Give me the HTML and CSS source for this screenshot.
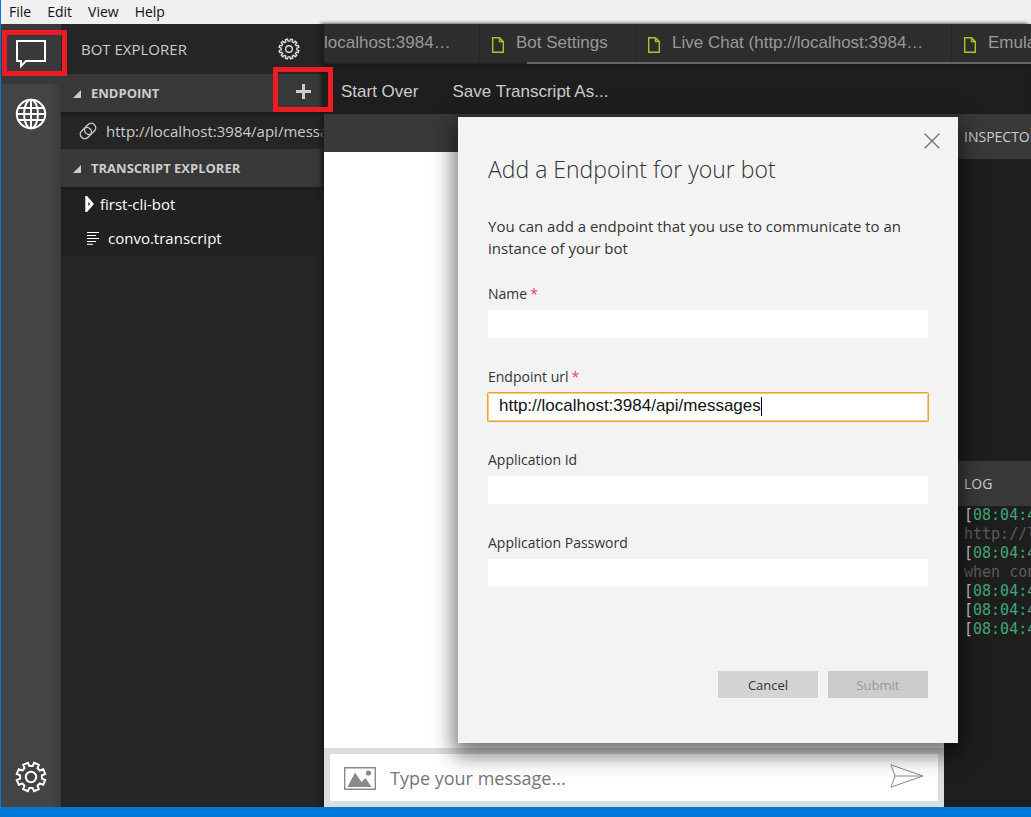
FILE: index.html
```html
<!DOCTYPE html>
<html lang="en">
<head>
<meta charset="utf-8">
<title>Bot Emulator</title>
<link rel="stylesheet" href="styles.css">
</head>
<body>
<svg class="defs" aria-hidden="true">
  <symbol id="gear" viewBox="-16 -16 32 32">
    <path d="M10.9 1.6 14.2 3.1 12.2 7.8 8.8 6.5 6.5 8.8 7.8 12.2 3.1 14.2 1.6 10.9H-1.6L-3.1 14.2-7.8 12.2-6.5 8.8-8.8 6.5-12.2 7.8-14.2 3.1-10.9 1.6V-1.6L-14.2-3.1-12.2-7.8-8.8-6.5-6.5-8.8-7.8-12.2-3.1-14.2-1.6-10.9H1.6L3.1-14.2 7.8-12.2 6.5-8.8 8.8-6.5 12.2-7.8 14.2-3.1 10.9-1.6Z"/>
    <circle r="5.2"/>
  </symbol>
  <symbol id="gear-fine" viewBox="-16 -16 32 32">
    <path d="M11.4 1.2 14.3 2.3 13.5 5.2 10.5 4.7 9.3 6.8 11.3 9.1 9.1 11.3 6.8 9.3 4.7 10.5 5.2 13.5 2.3 14.3 1.2 11.4H-1.2L-2.3 14.3-5.2 13.5-4.7 10.5-6.8 9.3-9.1 11.3-11.3 9.1-9.3 6.8-10.5 4.7-13.5 5.2-14.3 2.3-11.4 1.2V-1.2L-14.3-2.3-13.5-5.2-10.5-4.7-9.3-6.8-11.3-9.1-9.1-11.3-6.8-9.3-4.7-10.5-5.2-13.5-2.3-14.3-1.2-11.4H1.2L2.3-14.3 5.2-13.5 4.7-10.5 6.8-9.3 9.1-11.3 11.3-9.1 9.3-6.8 10.5-4.7 13.5-5.2 14.3-2.3 11.4-1.2Z"/>
    <circle r="4.8"/>
  </symbol>
  <symbol id="doc" viewBox="0 0 12 16">
    <path d="M.7.7H7.5L11.3 4.5V15.3H.7ZM7.5.7V4.5H11.3"/>
  </symbol>
</svg>
<div class="app">
  <nav class="menu">
    <button>File</button><button>Edit</button><button>View</button><button>Help</button>
  </nav>
  <div class="body">
    <nav class="rail">
      <button class="rail-item active" aria-label="Bot explorer">
        <svg width="32" height="30" viewBox="0 0 32 30"><path d="M2 2H30V22H11L6 27V22H2Z"/></svg>
        <span class="mark mark-chat"></span>
      </button>
      <button class="rail-item" aria-label="Services">
        <svg width="32" height="32" viewBox="0 0 32 32"><circle cx="16" cy="16" r="14.200"/><ellipse cx="16" cy="16" rx="7" ry="14.200"/><path d="M16 2V30M2 16H30M4 10H28M4 22H28"/></svg>
      </button>
      <button class="rail-item settings" aria-label="Settings">
        <svg width="32" height="32"><use href="#gear"/></svg>
      </button>
    </nav>
    <aside class="explorer">
      <header class="explorer-head">
        <h2>BOT EXPLORER</h2>
        <button aria-label="Bot settings"><svg width="22" height="22"><use href="#gear-fine"/></svg></button>
      </header>
      <h3 class="section"><i class="twisty"></i>ENDPOINT
        <button class="add" aria-label="Add endpoint"><svg width="15" height="15" viewBox="0 0 15 15"><path d="M7.500 0V15M0 7.500H15"/></svg><span class="mark mark-add"></span></button>
      </h3>
      <a class="endpoint" href="#">
        <svg width="18" height="18" viewBox="0 0 18 18"><g transform="rotate(-45 9 9)"><rect x="0" y="4.500" width="12" height="9" rx="4.500"/><rect x="6" y="4.500" width="12" height="9" rx="4.500"/></g></svg>
        <span>http://localhost:3984/api/messages</span>
      </a>
      <h3 class="section"><i class="twisty"></i>TRANSCRIPT EXPLORER</h3>
      <div class="tree">
        <a class="folder" href="#"><svg width="9" height="16" viewBox="0 0 9 16"><path d="M1.800 2 7 8 1.800 14Z"/></svg>first-cli-bot</a>
        <a class="file" href="#"><svg width="14" height="14" viewBox="0 0 14 14"><path d="M1 1.500H13M1 4.500H10M1 7.500H13M1 10.500H10M1 13.300H7"/></svg>convo.transcript</a>
      </div>
    </aside>
    <main class="main">
      <div class="tabs">
        <button class="tab first"><span>localhost:3984…</span></button>
        <button class="tab settings-tab"><svg width="12" height="16"><use href="#doc"/></svg>Bot Settings</button>
        <button class="tab chat-tab"><svg width="12" height="16"><use href="#doc"/></svg>Live Chat (http://localhost:3984…</button>
        <button class="tab last"><svg width="12" height="16"><use href="#doc"/></svg>Emulator</button>
      </div>
      <div class="scroll"><i></i></div>
      <div class="toolbar"><button>Start Over</button><button>Save Transcript As...</button></div>
      <div class="panes">
        <section class="chat">
          <div class="chat-head"></div>
          <div class="chat-log"></div>
          <form class="composer">
            <svg class="picture" width="32" height="24" viewBox="0 0 32 24"><path class="frame" d="M.7.7H31.300V22.300H.7Z"/><path d="M3.500 20 11 5.500 17.500 15 21.500 11 27.500 20Z"/><circle cx="24.500" cy="6" r="2.600"/></svg>
            <input type="text" placeholder="Type your message..." aria-label="Type your message">
            <button type="button" aria-label="Send"><svg width="34" height="24" viewBox="0 0 34 24"><path d="M1 .8 33 12 1 23.200 5 12ZM5 12H33"/></svg></button>
          </form>
        </section>
        <section class="side">
          <div class="inspector"><h2>INSPECTOR</h2></div>
          <div class="log">
            <h2>LOG</h2>
            <div class="lines">
              <p>[<b>08:04:42</b>]</p><p class="dim">http://localhost</p><p>[<b>08:04:42</b>]</p><p class="dim">when connecting</p><p>[<b>08:04:42</b>]</p><p>[<b>08:04:42</b>]</p><p>[<b>08:04:42</b>]</p>
            </div>
          </div>
        </section>
      </div>
    </main>
  </div>
  <footer class="status"></footer>
  <form class="dialog" role="dialog" aria-labelledby="dialog-title">
    <button type="button" class="close" aria-label="Close"><svg width="16" height="16" viewBox="0 0 16 16"><path d="M.7.7 15.300 15.300M15.300.7.7 15.300"/></svg></button>
    <h1 id="dialog-title">Add a Endpoint for your bot</h1>
    <p class="intro">You can add a endpoint that you use to communicate to an instance of your bot</p>
    <div class="field"><label for="name">Name<em>*</em></label><input id="name" type="text"></div>
    <div class="field focused"><label for="url">Endpoint url<em>*</em></label>
      <div class="entry"><input id="url" type="text" value="http://localhost:3984/api/messages"><span class="caret"></span></div></div>
    <div class="field"><label for="appid">Application Id</label><input id="appid" type="text"></div>
    <div class="field"><label for="pass">Application Password</label><input id="pass" type="password"></div>
    <div class="actions"><button type="button">Cancel</button><button type="submit" disabled>Submit</button></div>
  </form>
</div>
</body>
</html>
```
FILE: styles.css
```css
* { box-sizing: border-box; }
body, h1, h2, h3, p { margin: 0; }
body { font-family: "Open Sans", "Noto Sans", sans-serif; font-size: 14px; overflow: hidden; }
button, input { font: inherit; border: 0; padding: 0; background: none; color: inherit; }
a { color: inherit; text-decoration: none; }
svg { display: block; flex: none; fill: none; stroke: currentColor; }
.defs { position: absolute; width: 0; height: 0; }
.app { position: relative; display: flex; flex-direction: column; height: 100vh; border-left: 1px solid #0078d7; }
.menu { display: flex; gap: 16px; height: 24px; padding: 0 8px 2px; background: #f0f0f0; color: #111; }
.body { flex: 1; display: flex; min-height: 0; }

.rail { display: flex; flex-direction: column; width: 60px; background: linear-gradient(to right, #444 50px, #3b3b3b); color: #fff; flex: none; }
.rail-item { position: relative; display: flex; align-items: center; justify-content: center; height: 60px; stroke-width: 2; }
.rail-item.active { background: #393939; }
.rail-item.settings { margin-top: auto; }
.mark { position: absolute; border: 5px solid #ed1c24; z-index: 2; }
.mark-chat { left: 1px; top: 6px; width: 65px; height: 46px; }

.explorer { width: 263px; flex: none; background: #252525; color: #ccc; font-size: 15px; }
.explorer-head { display: flex; align-items: center; justify-content: space-between; height: 50px; padding: 0 24px 0 20px; }
.explorer-head h2 { font-size: 15px; font-weight: 400; }
.explorer-head svg { stroke-width: 2; color: #ddd; }
.section { display: flex; align-items: center; height: 38px; padding-left: 12px; background: #383838; font-size: 13px; font-weight: 700; }
.twisty { width: 8px; height: 8px; margin: 2px 10px 0 0; background: #ccc; clip-path: polygon(100% 0, 100% 100%, 0 100%); }
.add { position: relative; display: flex; align-items: center; justify-content: center; width: 42px; height: 38px; padding-bottom: 4px; margin-left: auto; stroke-width: 3; }
.mark-add { left: -9px; top: -7px; width: 60px; height: 45px; }
.endpoint { display: flex; align-items: center; gap: 9px; height: 37px; padding-left: 18px; overflow: hidden; white-space: nowrap; box-shadow: inset 0 4px 4px -2px #1a1a1a; }
.endpoint svg { stroke-width: 1.4; }
.tree { height: 69px; background: #212121; color: #fff; box-shadow: inset 0 4px 4px -2px #1a1a1a; }
.folder, .file { display: flex; align-items: center; height: 34px; }
.folder { gap: 6px; padding-left: 24px; stroke-width: 3; }
.file { gap: 8px; padding-left: 25px; }

.main { flex: 1; display: flex; flex-direction: column; min-width: 0; background: #1e1e1e; box-shadow: -3px 0 4px #1a1a1a; }
.tabs { display: flex; height: 38px; overflow: hidden; background: #2d2d2d; color: #999; font: 17px "Liberation Sans", Arial, sans-serif; }
.tab { display: flex; align-items: center; gap: 12px; flex: none; padding-left: 12px; border-right: 1px solid #252525; white-space: nowrap; }
.tab svg { margin-top: 3px; color: #a3c520; stroke-width: 1.4; }
.tab.first { width: 156px; padding-left: 0; }
.settings-tab { width: 156px; }
.chat-tab { width: 316px; }
.scroll { height: 2px; padding-left: 203px; background: #252525; }
.scroll i { display: block; height: 2px; background: #666; }
.toolbar { display: flex; gap: 34px; height: 50px; padding: 5px 0 0 17px; color: #ccc; font: 17px "Liberation Sans", Arial, sans-serif; box-shadow: inset 0 4px 4px -2px #181818; }
.panes { flex: 1; display: flex; min-height: 0; }
.chat { flex: 1; display: flex; flex-direction: column; min-width: 0; background: #fff; }
.chat-head { height: 38px; background: #393939; }
.chat-log { flex: 1; }
.composer { display: flex; align-items: center; height: 59px; padding: 0 14px; border: 6px solid #dadee1; color: #8a8a8a; }
.picture { margin-top: 3px; fill: #8a8a8a; stroke: none; }
.picture .frame { fill: none; stroke: #8a8a8a; stroke-width: 1.4; }
.composer input { flex: 1; min-width: 0; margin-left: 14px; font-size: 18px; outline: 0; }
.composer input::placeholder { color: #767676; }
.composer button { padding-bottom: 4px; }
.side { display: flex; flex-direction: column; width: 87px; flex: none; color: #ccc; overflow: hidden; }
.side h2 { height: 45px; padding-left: 20px; line-height: 46px; background: #393939; font-size: 14px; font-weight: 400; }
.inspector, .log { flex: 1; }
.lines { padding-left: 20px; font: 15px/19px "DejaVu Sans Mono", monospace; white-space: nowrap; }
.lines b { color: #3fa876; font-weight: 400; }
.lines .dim { color: #5c5c5c; }
.status { height: 10px; background: #0078d7; }

.dialog { position: absolute; left: 457px; top: 117px; width: 500px; padding: 33px 30px 45px; background: #f3f3f3; color: #333; box-shadow: 0 8px 20px 4px rgba(0, 0, 0, .55); }
.close { position: absolute; right: 18px; top: 16px; color: #777; stroke-width: 1.4; }
.dialog h1 { font-size: 23px; font-weight: 300; line-height: 38px; }
.intro { margin: 27px 0 22px; font-size: 15px; line-height: 22px; }
.field { margin-bottom: 26px; }
.field label { display: block; height: 29px; line-height: 26px; }
.field em { margin-left: 3px; color: #e8475b; font-style: normal; }
.field input { display: block; width: 100%; height: 28px; padding: 0 11px 2px; background: #fff; font: 17px "Liberation Sans", Arial, sans-serif; color: #111; outline: 0; }
.focused input { border-radius: 1px; box-shadow: 0 0 0 1px #e8a62f, inset 0 0 0 1px #f3cc85; }
.entry { position: relative; }
.caret { position: absolute; left: 273px; top: 4px; width: 1px; height: 19px; background: #000; }
.actions { display: flex; justify-content: flex-end; gap: 10px; margin-top: 84px; }
.actions button { width: 100px; height: 27px; background: #d4d4d4; font-size: 13px; }
.actions button:disabled { background: #ccc; color: #999; }
```
